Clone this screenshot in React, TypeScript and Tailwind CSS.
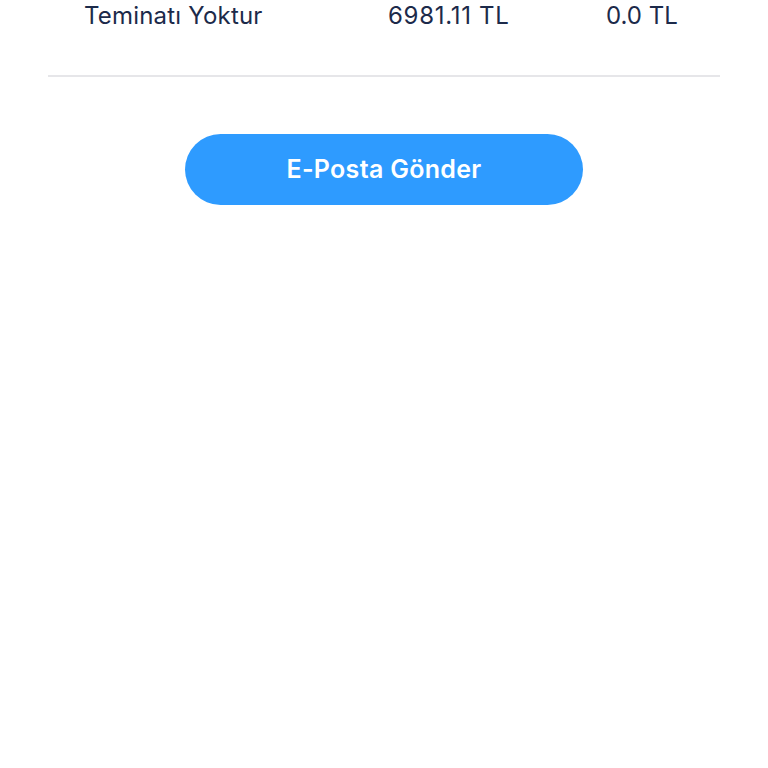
export default function App() {
  return (
    <div className="w-[768px] h-[768px] bg-white overflow-hidden" style={{ fontFamily: 'Inter, "Noto Sans", sans-serif' }}>
      <div className="flex items-center h-[32px] text-[24px] text-[#1c2a4a] leading-none">
        <div className="pl-[84px] w-[388px] tracking-[0.2px]">Teminatı Yoktur</div>
        <div className="w-[218px] tracking-[0.7px]">6981.11 TL</div>
        <div>0.0 TL</div>
      </div>
      <div className="mx-[48px] mt-[43px] h-[2px] bg-[#e6e6e9]" />
      <div className="flex justify-center mt-[57px]">
        <button className="w-[398px] h-[71px] rounded-full bg-[#2e9bff] text-white text-[25px] font-semibold tracking-[0.3px]">
          E-Posta Gönder
        </button>
      </div>
    </div>
  );
}
